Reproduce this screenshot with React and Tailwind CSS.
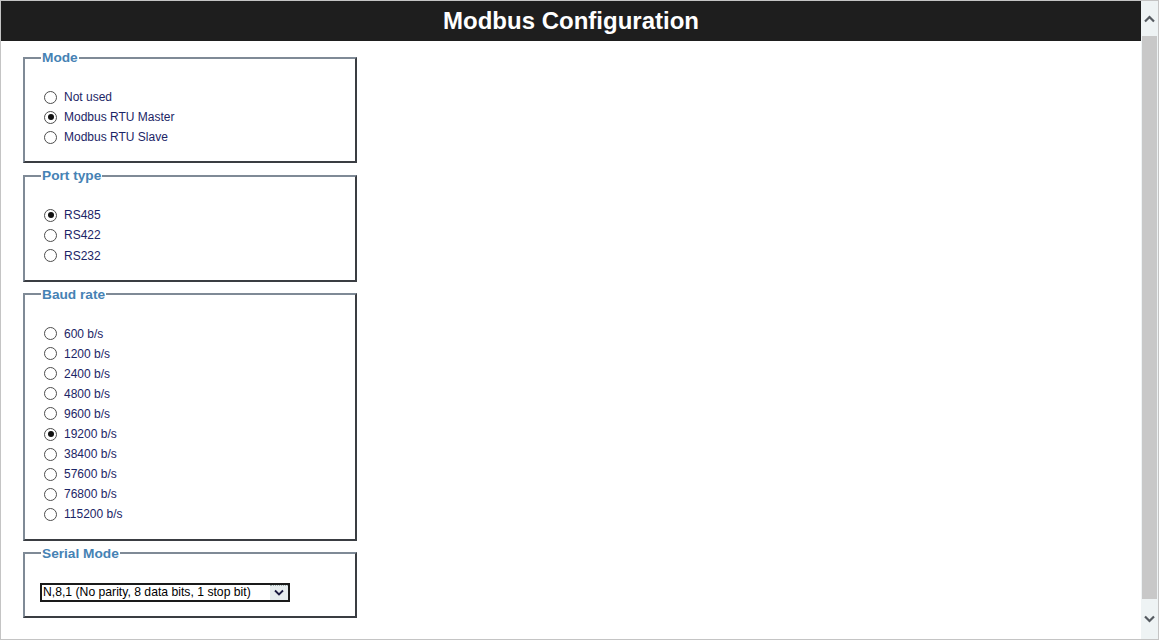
import { useState } from "react";

const modes = ["Not used", "Modbus RTU Master", "Modbus RTU Slave"];
const ports = ["RS485", "RS422", "RS232"];
const bauds = ["600", "1200", "2400", "4800", "9600", "19200", "38400", "57600", "76800", "115200"];

function Radio({ label, checked, onClick }) {
  return (
    <div className="flex h-[20.1px] items-center cursor-default" onClick={onClick}>
      <span className="ml-[3px] flex h-[13px] w-[13px] items-center justify-center rounded-full border border-[#4d4d4d] bg-white">
        {checked && <span className="h-[6px] w-[6px] rounded-full bg-[#111]" />}
      </span>
      <span className="ml-[7px] text-[12px] text-[#1c2566]">{label}</span>
    </div>
  );
}

function Box({ title, children }) {
  return (
    <fieldset className="ml-[22px] mb-[5px] w-[334px] border-2 border-t-[#7f8a96] border-l-[#7f8a96] border-r-[#3a3d42] border-b-[#3a3d42] px-[16px] pt-[22px] pb-[14px]">
      <legend className="px-[1px] text-[13.7px] leading-[15px] font-bold text-[#4682b4]">{title}</legend>
      {children}
    </fieldset>
  );
}

export default function App() {
  const [mode, setMode] = useState(1);
  const [port, setPort] = useState(0);
  const [baud, setBaud] = useState(5);

  return (
    <div
      className="flex h-[640px] w-[1159px] border border-[#c4c4c4] bg-white overflow-hidden"
      style={{ fontFamily: '"Liberation Sans", Arial, sans-serif' }}
    >
      <div className="flex flex-1 flex-col">
        <header className="flex h-[40px] items-center justify-center bg-[#1e1e1e]">
          <h1 className="text-[24px] font-bold text-white">Modbus Configuration</h1>
        </header>

        <div className="pt-[9px]">
          <Box title="Mode">
            {modes.map((m, i) => (
              <Radio key={m} label={m} checked={mode === i} onClick={() => setMode(i)} />
            ))}
          </Box>
          <Box title="Port type">
            {ports.map((p, i) => (
              <Radio key={p} label={p} checked={port === i} onClick={() => setPort(i)} />
            ))}
          </Box>
          <Box title="Baud rate">
            {bauds.map((b, i) => (
              <Radio key={b} label={`${b} b/s`} checked={baud === i} onClick={() => setBaud(i)} />
            ))}
          </Box>
          <Box title="Serial Mode">
            <div className="ml-[-1px] flex h-[19px] w-[250px] border-2 border-[#1a1a1a] bg-white">
              <span className="flex-1 pl-[1px] text-[12.2px] leading-[15px] text-black">N,8,1 (No parity, 8 data bits, 1 stop bit)</span>
              <span className="flex w-[18px] items-center justify-center border-t border-dotted border-[#9aa] bg-[#e6ecee]">
                <svg width="10" height="7" viewBox="0 0 10 7">
                  <path d="M1 1.5 L5 5.5 L9 1.5" fill="none" stroke="#1a1a40" strokeWidth="1.8" />
                </svg>
              </span>
            </div>
          </Box>
        </div>
      </div>

      <div className="flex w-[17px] flex-col bg-[#eef3f4]">
        <div className="flex h-[35px] items-center justify-center">
          <svg width="11" height="8" viewBox="0 0 11 8">
            <path d="M1 6.5 L5.5 2 L10 6.5" fill="none" stroke="#555a60" strokeWidth="2.2" />
          </svg>
        </div>
        <div className="mx-[1px] flex-1 bg-[#c8c8c8]" />
        <div className="flex h-[40px] items-center justify-center">
          <svg width="11" height="8" viewBox="0 0 11 8">
            <path d="M1 1.5 L5.5 6 L10 1.5" fill="none" stroke="#555a60" strokeWidth="2.2" />
          </svg>
        </div>
      </div>
    </div>
  );
}
